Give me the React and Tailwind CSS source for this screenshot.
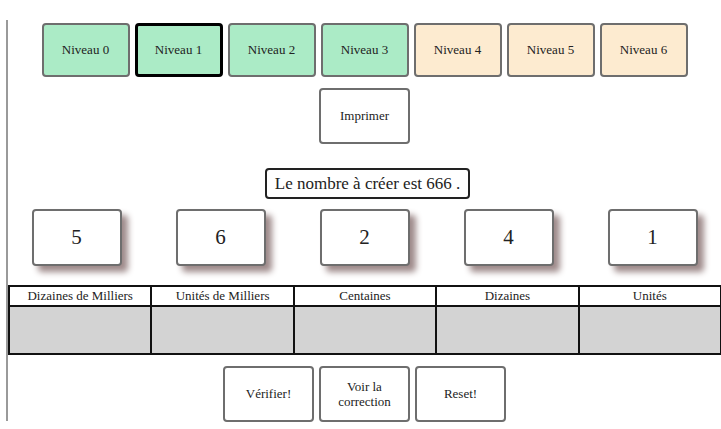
import React from 'react';

const niveaux = [
  { label: 'Niveau 0', color: 'bg-[#abebc6]' },
  { label: 'Niveau 1', color: 'bg-[#abebc6]', active: true },
  { label: 'Niveau 2', color: 'bg-[#abebc6]' },
  { label: 'Niveau 3', color: 'bg-[#abebc6]' },
  { label: 'Niveau 4', color: 'bg-[#fdebd0]' },
  { label: 'Niveau 5', color: 'bg-[#fdebd0]' },
  { label: 'Niveau 6', color: 'bg-[#fdebd0]' },
];

const chiffres = ['5', '6', '2', '4', '1'];

const colonnes = ['Dizaines de Milliers', 'Unités de Milliers', 'Centaines', 'Dizaines', 'Unités'];

const App = () => {
  return (
    <div className="min-h-[429px] bg-white [font-family:Liberation_Serif,serif] text-[#222]">
      <div className="ml-[6px] mt-[20px] h-[401px] border-l-2 border-[#9a9a9a] pt-[3px]">
        {/* Niveaux */}
        <div className="flex justify-center gap-[5px]">
          {niveaux.map((n, i) => (
            <button
              key={i}
              className={`h-[54px] w-[88px] rounded-[4px] text-[13px] ${n.color} ${
                n.active ? 'border-[3px] border-black' : 'border-2 border-[#6e6e6e]'
              }`}
            >
              {n.label}
            </button>
          ))}
        </div>

        {/* Imprimer */}
        <div className="mt-[11px] flex justify-center">
          <button className="h-[56px] w-[91px] rounded-[4px] border-2 border-[#6e6e6e] bg-white text-[13px]">
            Imprimer
          </button>
        </div>

        {/* Consigne */}
        <div className="mt-[24px] flex justify-center">
          <div className="ml-[6px] flex h-[31px] items-center rounded-[4px] border-2 border-[#222] px-[8px] text-[17px]">
            Le nombre à créer est 666 .
          </div>
        </div>

        {/* Étiquettes */}
        <div className="mt-[10px] flex justify-center gap-[54px]">
          {chiffres.map((c, i) => (
            <div
              key={i}
              className="flex h-[57px] w-[90px] items-center justify-center rounded-[4px] border-2 border-[#6e6e6e] bg-white text-[21px] shadow-[6px_6px_6px_#9e8a8a]"
            >
              {c}
            </div>
          ))}
        </div>

        {/* Tableau */}
        <table className="mt-[19px] w-[714px] table-fixed border-collapse border-2 border-[#111]">
          <thead>
            <tr>
              {colonnes.map((c, i) => (
                <th key={i} className="h-[20px] border-2 border-[#111] bg-white p-0 text-[13px] font-normal leading-[16px]">
                  {c}
                </th>
              ))}
            </tr>
          </thead>
          <tbody>
            <tr>
              {colonnes.map((c, i) => (
                <td key={i} className="h-[48px] border-2 border-[#111] bg-[#d3d3d3]"></td>
              ))}
            </tr>
          </tbody>
        </table>

        {/* Actions */}
        <div className="mt-[11px] flex justify-center gap-[5px]">
          <button className="h-[56px] w-[91px] rounded-[4px] border-2 border-[#6e6e6e] bg-white text-[13px]">
            Vérifier!
          </button>
          <button className="h-[56px] w-[91px] rounded-[4px] border-2 border-[#6e6e6e] bg-white text-[13px] leading-[15px]">
            Voir la<br />correction
          </button>
          <button className="h-[56px] w-[91px] rounded-[4px] border-2 border-[#6e6e6e] bg-white text-[13px]">
            Reset!
          </button>
        </div>
      </div>
    </div>
  );
};

export default App;
